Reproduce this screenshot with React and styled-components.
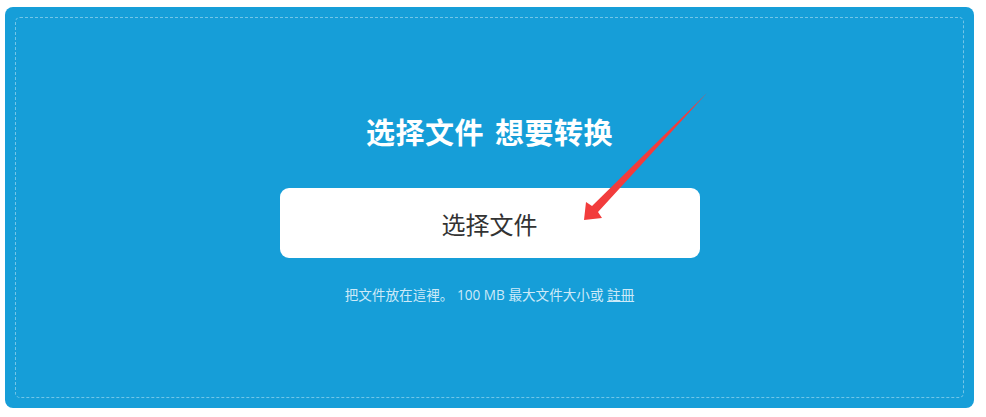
import React from "react";
import styled, { createGlobalStyle } from "styled-components";

const GlobalStyle = createGlobalStyle`
  html, body {
    margin: 0;
    padding: 0;
    background: #ffffff;
    font-family: "Noto Sans CJK SC", "Open Sans", sans-serif;
  }
`;

const Page = styled.div`
  position: relative;
  width: 986px;
  height: 417px;
  box-sizing: border-box;
  padding: 7px 12px 9px 5px;
`;

const Panel = styled.div`
  height: 100%;
  box-sizing: border-box;
  padding: 10px;
  background: #169ed8;
  border-radius: 8px;
`;

const DropZone = styled.div`
  height: 100%;
  box-sizing: border-box;
  border: 1px dashed rgba(255, 255, 255, 0.4);
  border-radius: 5px;
  display: flex;
  flex-direction: column;
  align-items: center;
  padding-top: 93px;
`;

const Title = styled.h2`
  margin: 0;
  color: #ffffff;
  font-size: 29px;
  font-weight: 700;
  line-height: 40px;
  letter-spacing: 0.5px;
  word-spacing: 4px;
`;

const PickButton = styled.button`
  margin-top: 37px;
  width: 420px;
  height: 70px;
  border: none;
  border-radius: 9px;
  background: #ffffff;
  color: #333333;
  font-family: "Noto Sans CJK SC", sans-serif;
  font-size: 24px;
  font-weight: 400;
  cursor: pointer;
`;

const Hint = styled.p`
  margin: 27px 0 0;
  color: #cdeaf8;
  font-family: "Open Sans", "Noto Sans CJK SC", sans-serif;
  font-size: 13.6px;
  line-height: 20px;
  a {
    color: inherit;
    text-decoration: underline;
  }
`;

const Arrow = styled.svg`
  position: absolute;
  left: 0;
  top: 0;
  pointer-events: none;
`;

const App = () => (
  <>
    <GlobalStyle />
    <Page>
      <Panel>
        <DropZone>
          <Title>选择文件 想要转换</Title>
          <PickButton>选择文件</PickButton>
          <Hint>
            把文件放在這裡。 100 MB 最大文件大小或 <a href="#">註冊</a>
          </Hint>
        </DropZone>
      </Panel>
      <Arrow width="986" height="417" viewBox="0 0 986 417">
        <polygon
          points="707,93 598,212 602,218 584,220 586,202 592,206"
          fill="#f23c3c"
        />
      </Arrow>
    </Page>
  </>
);

export default App;
